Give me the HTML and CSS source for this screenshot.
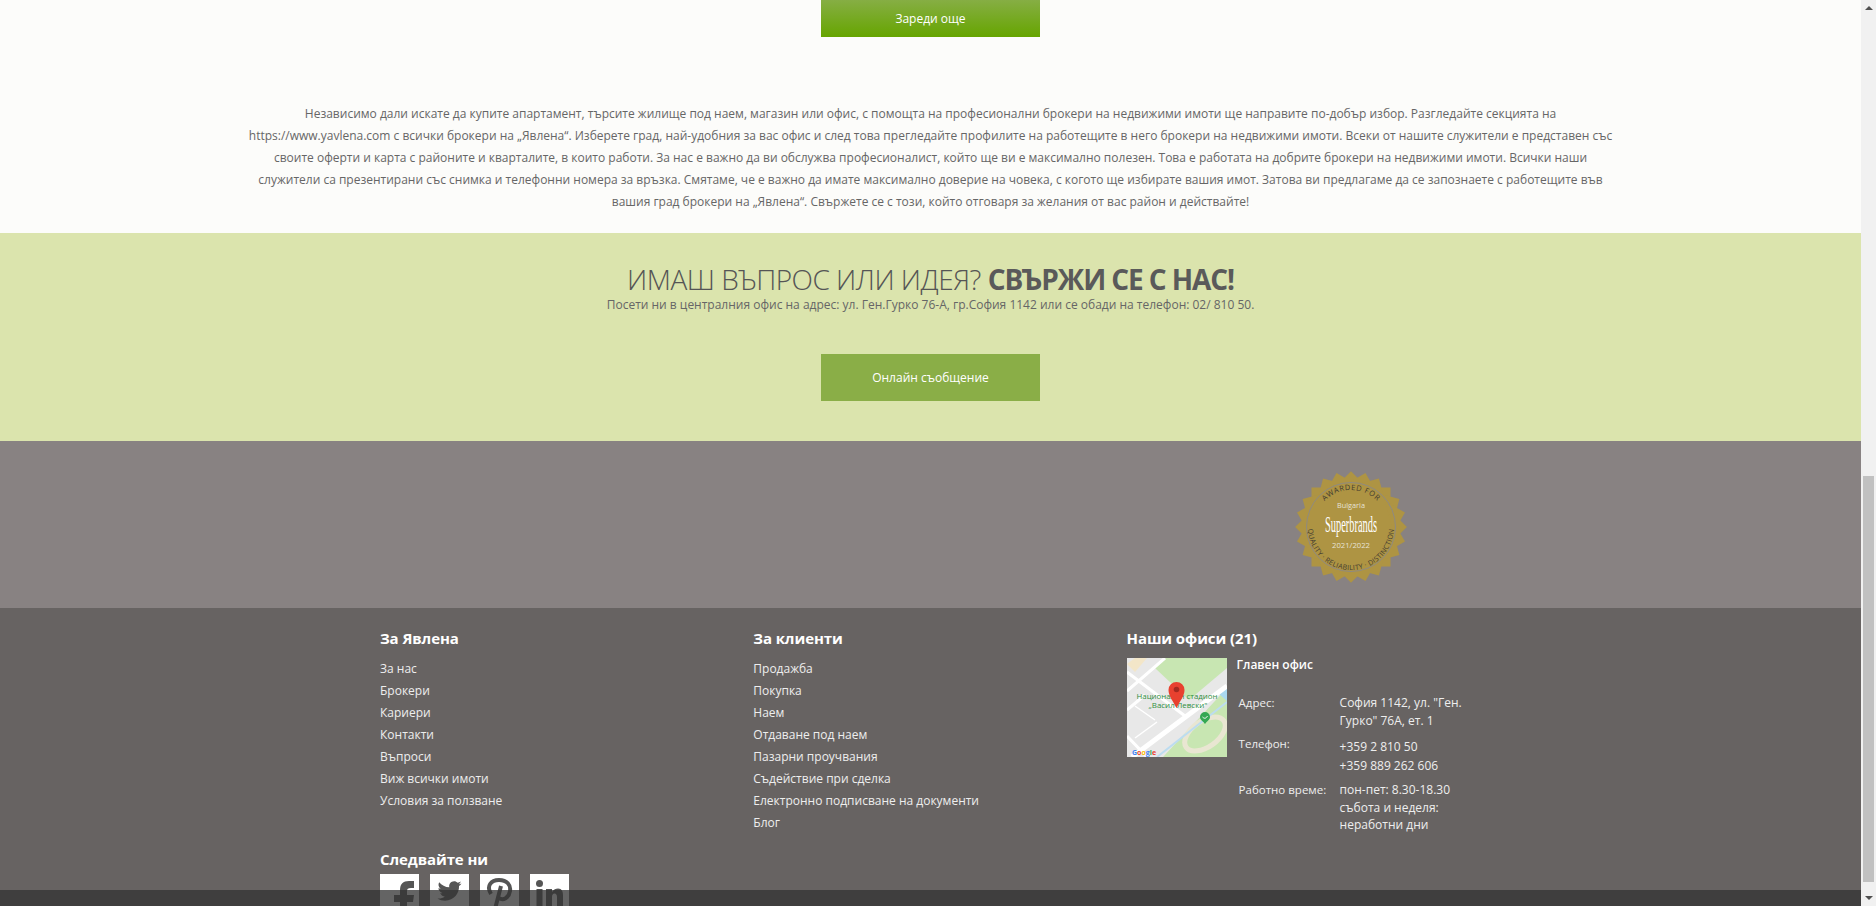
FILE: index.html
```html
<!DOCTYPE html>
<html lang="bg">
<head>
  <meta charset="UTF-8">
  <title>Явлена - брокери</title>
  <link rel="stylesheet" href="styles.css">
</head>
<body>
  <div class="page">
    <section class="intro">
      <a class="load-more" href="#">Зареди още</a>
      <p class="intro-text">Независимо дали искате да купите апартамент, търсите жилище под наем, магазин или офис, с помощта на професионални брокери на недвижими имоти ще направите по-добър избор. Разгледайте секцията на<br>https://www.yavlena.com с всички брокери на „Явлена“. Изберете град, най-удобния за вас офис и след това прегледайте профилите на работещите в него брокери на недвижими имоти. Всеки от нашите служители е представен със<br>своите оферти и карта с районите и кварталите, в които работи. За нас е важно да ви обслужва професионалист, който ще ви е максимално полезен. Това е работата на добрите брокери на недвижими имоти. Всички наши<br>служители са презентирани със снимка и телефонни номера за връзка. Смятаме, че е важно да имате максимално доверие на човека, с когото ще избирате вашия имот. Затова ви предлагаме да се запознаете с работещите във<br>вашия град брокери на „Явлена“. Свържете се с този, който отговаря за желания от вас район и действайте!</p>
    </section>

    <section class="contact">
      <h2 class="contact-title">ИМАШ ВЪПРОС ИЛИ ИДЕЯ? <strong>СВЪРЖИ СЕ С НАС!</strong></h2>
      <p class="contact-text">Посети ни в централния офис на адрес: ул. Ген.Гурко 76-А, гр.София 1142 или се обади на телефон: 02/ 810 50.</p>
      <a class="contact-btn" href="#">Онлайн съобщение</a>
    </section>

    <section class="award">
      <svg class="award-badge" width="112" height="112" viewBox="-56 -56 112 112">
        <defs>
          <path id="arc-top" d="M-37 0A37 37 0 0 1 37 0"/>
          <path id="arc-bottom" d="M-39 -18A43 43 0 1 0 39 -18"/>
        </defs>
        <g fill="#ae9443">
          <rect x="-39.500" y="-39.500" width="79" height="79"/>
          <rect x="-39.500" y="-39.500" width="79" height="79" transform="rotate(15)"/>
          <rect x="-39.500" y="-39.500" width="79" height="79" transform="rotate(30)"/>
          <rect x="-39.500" y="-39.500" width="79" height="79" transform="rotate(45)"/>
          <rect x="-39.500" y="-39.500" width="79" height="79" transform="rotate(60)"/>
          <rect x="-39.500" y="-39.500" width="79" height="79" transform="rotate(75)"/>
        </g>
        <circle r="44.500" fill="none" stroke="#8f8a80" stroke-width="1"/>
        <text class="badge-top"><textPath href="#arc-top" startOffset="50%" text-anchor="middle">AWARDED FOR</textPath></text>
        <text class="badge-bottom"><textPath href="#arc-bottom" startOffset="50%" text-anchor="middle">QUALITY · RELIABILITY · DISTINCTION</textPath></text>
        <text class="badge-small" x="0" y="-19" text-anchor="middle" textLength="28" lengthAdjust="spacingAndGlyphs">Bulgaria</text>
        <text class="badge-brand" x="0" y="5" text-anchor="middle" textLength="52" lengthAdjust="spacingAndGlyphs">Superbrands</text>
        <text class="badge-small" x="0" y="21" text-anchor="middle" textLength="38" lengthAdjust="spacingAndGlyphs">2021/2022</text>
      </svg>
    </section>

    <footer class="footer">
      <div class="footer-cols">
        <div class="footer-col">
          <h3 class="footer-title">За Явлена</h3>
          <ul class="footer-links">
            <li>За нас</li>
            <li>Брокери</li>
            <li>Кариери</li>
            <li>Контакти</li>
            <li>Въпроси</li>
            <li>Виж всички имоти</li>
            <li>Условия за ползване</li>
          </ul>
          <h3 class="footer-title follow-title">Следвайте ни</h3>
          <div class="social">
            <a class="social-icon" href="#">
              <svg width="39" height="40" viewBox="0 0 39 40"><path fill="#555" transform="translate(0 5)" d="M20 40V23h-6v-7h6v-5c0-6 3-9 9-9h5v7h-3c-3 0-4 1-4 3v4h7l-1 7h-6v17z"/></svg>
            </a>
            <a class="social-icon" href="#">
              <svg width="39" height="40" viewBox="0 0 39 40"><path fill="#555" transform="translate(7.500 5)" d="M24 4.557c-.883.392-1.832.656-2.828.775 1.017-.609 1.798-1.574 2.165-2.724-.951.564-2.005.974-3.127 1.195-.897-.957-2.178-1.555-3.594-1.555-3.179 0-5.515 2.966-4.797 6.045-4.091-.205-7.719-2.165-10.148-5.144-1.29 2.213-.669 5.108 1.523 6.574-.806-.026-1.566-.247-2.229-.616-.054 2.281 1.581 4.415 3.949 4.89-.693.188-1.452.232-2.224.084.626 1.956 2.444 3.379 4.6 3.419-2.07 1.623-4.678 2.348-7.29 2.04 2.179 1.397 4.768 2.212 7.548 2.212 9.142 0 14.307-7.721 13.995-14.646.962-.695 1.797-1.562 2.457-2.549z"/></svg>
            </a>
            <a class="social-icon" href="#">
              <svg width="39" height="40" viewBox="0 0 39 40"><path fill="none" stroke="#555" stroke-width="4" d="M11 20C6 12 11 6 19 6c8 0 12 5 11 11-1 7-7 10-11 7M21 12l-7 27"/></svg>
            </a>
            <a class="social-icon" href="#">
              <svg width="39" height="40" viewBox="0 0 39 40"><g fill="#555"><circle cx="9.500" cy="9.500" r="3.500"/><rect x="6.500" y="15" width="6" height="23"/><path d="M16 15h6v3c1.500-2.500 4-3.500 6-3.500 4 0 5 3 5 7V38h-6V23c0-2-1-3.500-2.500-3.500s-2.500 1.500-2.500 3.500v15h-6z"/></g></svg>
            </a>
          </div>
        </div>

        <div class="footer-col">
          <h3 class="footer-title">За клиенти</h3>
          <ul class="footer-links">
            <li>Продажба</li>
            <li>Покупка</li>
            <li>Наем</li>
            <li>Отдаване под наем</li>
            <li>Пазарни проучвания</li>
            <li>Съдействие при сделка</li>
            <li>Електронно подписване на документи</li>
            <li>Блог</li>
          </ul>
        </div>

        <div class="footer-col">
          <h3 class="footer-title">Наши офиси (21)</h3>
          <div class="office">
            <svg class="office-map" width="100" height="99" viewBox="0 0 100 99">
              <rect width="100" height="99" fill="#e8e8e8"/>
              <path d="M36 0H100V10L62 42 28 10z" fill="#c8e6b2"/>
              <path d="M100 30V99H36z" fill="#c8e6b2"/>
              <path d="M100 30V43L92 36z" fill="#a9d8f0"/>
              <path d="M0 6L8 0H20L8 14z" fill="#f3e6c8"/>
              <ellipse cx="78" cy="76" rx="23" ry="13" transform="rotate(-35 78 76)" fill="#c8e6b2" stroke="#e9e6d2" stroke-width="5"/>
              <g fill="none" stroke="#fff">
                <path d="M5 99L100 28" stroke-width="5"/>
                <path d="M0 14L58 58M38 0L0 33M20 99L0 78M18 37L0 52" stroke-width="3"/>
                <path d="M8 48L28 62M30 64L8 80" stroke-width="1.500"/>
              </g>
              <path d="M30 99L100 44" fill="none" stroke="#bcdcf0" stroke-width="2"/>
              <text class="map-label" x="50" y="41" text-anchor="middle" textLength="81" lengthAdjust="spacingAndGlyphs">Национален стадион</text>
              <text class="map-label" x="51" y="50" text-anchor="middle" textLength="59" lengthAdjust="spacingAndGlyphs">„Васил Левски"</text>
              <path d="M49.500 50C46 43 41.500 38 41.500 32a8 8 0 0 1 16 0c0 6-4.500 11-8 18z" fill="#e8412f"/>
              <circle cx="49.500" cy="31.500" r="2.800" fill="#a32a20"/>
              <path d="M78 66c-2-3-5-4-5-7a5 5 0 0 1 10 0c0 3-3 4-5 7z" fill="#34a853"/>
              <path d="M75.500 59c2 2 3.500 1.500 5-1" fill="none" stroke="#fff" stroke-width="1"/>
              <text class="map-logo" x="5" y="97"><tspan fill="#4285f4">G</tspan><tspan fill="#ea4335">o</tspan><tspan fill="#fbbc05">o</tspan><tspan fill="#4285f4">g</tspan><tspan fill="#34a853">l</tspan><tspan fill="#ea4335">e</tspan></text>
            </svg>
            <div class="office-info">
              <div class="office-name">Главен офис</div>
              <div class="office-row">
                <span class="office-label">Адрес:</span>
                <span class="office-value">София 1142, ул. "Ген.<br>Гурко" 76А, ет. 1</span>
              </div>
              <div class="office-row phone-row">
                <span class="office-label">Телефон:</span>
                <span class="office-value phone-value">+359 2 810 50<br>+359 889 262 606</span>
              </div>
              <div class="office-row hours-row">
                <span class="office-label">Работно време:</span>
                <span class="office-value">пон-пет: 8.30-18.30<br>събота и неделя:<br>неработни дни</span>
              </div>
            </div>
          </div>
        </div>
      </div>
    </footer>

    <div class="bottom-bar"></div>
  </div>

  <div class="scrollbar">
    <span class="arrow-up"></span>
    <div class="scroll-track"><div class="scroll-thumb"></div></div>
    <span class="arrow-down"></span>
  </div>
</body>
</html>
```

FILE: styles.css
```css
html, body {
  margin: 0;
  padding: 0;
  height: 100%;
  overflow: hidden;
}

body {
  display: flex;
  font-family: "Open Sans", "Noto Sans", sans-serif;
  font-size: 12px;
}

.page {
  flex: 1;
  height: 906px;
  position: relative;
  overflow: hidden;
}

/* intro */
.intro {
  height: 233px;
  box-sizing: border-box;
  background-color: #fcfcfa;
  text-align: center;
}

.load-more {
  display: block;
  width: 219px;
  height: 37px;
  margin: 0 auto;
  line-height: 37px;
  color: #fff;
  text-decoration: none;
  background: linear-gradient(#86ae44, #66a500);
}

.intro-text {
  margin: 66px 0 0;
  line-height: 22px;
  color: #666;
  white-space: nowrap;
}

/* contact */
.contact {
  height: 208px;
  box-sizing: border-box;
  padding-top: 30px;
  background-color: #dbe4ad;
  text-align: center;
}

.contact-title {
  margin: 0;
  font-size: 28px;
  line-height: 33px;
  font-weight: 300;
  letter-spacing: -0.5px;
  color: #555;
}

.contact-title strong {
  font-weight: 700;
  letter-spacing: -1.1px;
  color: #5a5a5a;
}

.contact-text {
  margin: 0;
  line-height: 18px;
  color: #666;
}

.contact-btn {
  display: block;
  width: 219px;
  height: 47px;
  margin: 40px auto 0;
  line-height: 47px;
  color: #fff;
  text-decoration: none;
  background-color: #8aae47;
}

/* award */
.award {
  height: 167px;
  box-sizing: border-box;
  padding: 30px 0 0 1295px;
  background-color: #888282;
}

.award-badge {
  display: block;
}

.badge-top {
  font-size: 7.5px;
  letter-spacing: 0.6px;
  fill: #3f3a30;
}

.badge-bottom {
  font-size: 7px;
  letter-spacing: 0.3px;
  fill: #3f3a30;
}

.badge-small {
  font-size: 8px;
  fill: #e6e2d6;
}

.badge-brand {
  font-family: "Liberation Serif", serif;
  font-size: 24px;
  fill: #fff;
}

/* footer */
.footer {
  height: 298px;
  box-sizing: border-box;
  padding: 20px 0 0 380px;
  background-color: #676362;
  color: #eee;
}

.footer-cols {
  display: grid;
  grid-template-columns: repeat(3, 373.3px);
}

.footer-title {
  margin: 0;
  font-size: 15px;
  line-height: 20px;
  font-weight: 700;
  letter-spacing: -0.1px;
  color: #fff;
}

.footer-links {
  list-style: none;
  margin: 10px 0 0;
  padding: 0;
}

.footer-links li {
  line-height: 22px;
}

.follow-title {
  margin-top: 37px;
}

.social {
  display: flex;
  gap: 11px;
  margin-top: 5px;
}

.social-icon {
  display: block;
  width: 39px;
  height: 40px;
  background-color: #fff;
}

.social-icon svg {
  display: block;
}

/* office */
.office {
  display: flex;
  gap: 10px;
  margin-top: 10px;
}

.office-map {
  display: block;
  flex: none;
}

.map-label {
  font-size: 7px;
  fill: #2f8f3e;
}

.map-logo {
  font-size: 7px;
  font-weight: 700;
}

.office-name {
  line-height: 14px;
  font-weight: 600;
  color: #fff;
}

.office-row {
  display: grid;
  grid-template-columns: 101px 1fr;
  margin: 22px 0 0 2px;
  line-height: 17.5px;
}

.phone-row {
  margin-top: 6px;
}

.hours-row {
  margin-top: 6px;
}

.office-label {
  font-size: 11.5px;
}

.phone-value {
  padding-top: 2px;
  line-height: 19px;
}

/* bar over the bottom of the page */
.bottom-bar {
  position: absolute;
  left: 0;
  right: 0;
  bottom: 0;
  height: 16px;
  background-color: rgba(51, 51, 51, 0.76);
}

/* scrollbar */
.scrollbar {
  width: 15px;
  height: 906px;
  display: flex;
  flex-direction: column;
  align-items: center;
  background-color: #f1f1f1;
}

.arrow-up,
.arrow-down {
  width: 0;
  height: 0;
  border-left: 4px solid transparent;
  border-right: 4px solid transparent;
}

.arrow-up {
  margin-top: 6px;
  border-bottom: 4px solid #505050;
}

.arrow-down {
  margin-bottom: 6px;
  border-top: 4px solid #505050;
}

.scroll-track {
  flex: 1;
  width: 11px;
  padding-top: 466px;
  box-sizing: border-box;
}

.scroll-thumb {
  height: 406px;
  background-color: #c1c1c1;
}
```
